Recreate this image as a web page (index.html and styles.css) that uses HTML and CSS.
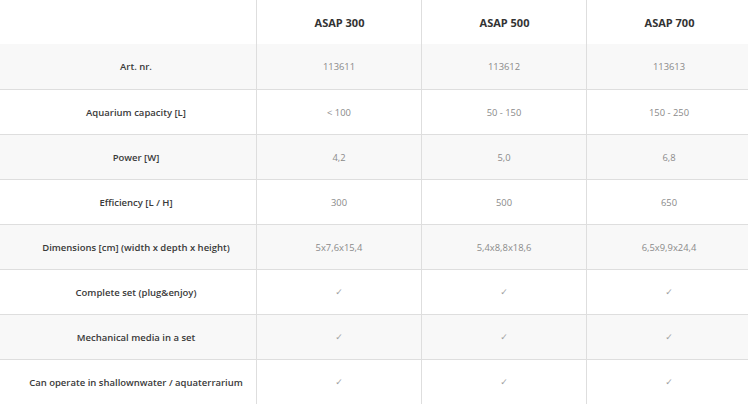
FILE: index.html
```html
<!DOCTYPE html>
<html lang="en">
<head>
<meta charset="utf-8">
<title>ASAP comparison</title>
<link rel="stylesheet" href="styles.css">
</head>
<body>
<div class="wrap">
  <div class="specs">
    <div class="row head">
      <div class="cell label"></div>
      <div class="cell model">ASAP 300</div>
      <div class="cell model">ASAP 500</div>
      <div class="cell model">ASAP 700</div>
    </div>
    <div class="row first striped">
      <div class="cell label">Art. nr.</div>
      <div class="cell val">113611</div>
      <div class="cell val">113612</div>
      <div class="cell val">113613</div>
    </div>
    <div class="row">
      <div class="cell label">Aquarium capacity [L]</div>
      <div class="cell val">&lt; 100</div>
      <div class="cell val">50 - 150</div>
      <div class="cell val">150 - 250</div>
    </div>
    <div class="row striped">
      <div class="cell label">Power [W]</div>
      <div class="cell val">4,2</div>
      <div class="cell val">5,0</div>
      <div class="cell val">6,8</div>
    </div>
    <div class="row">
      <div class="cell label">Efficiency [L / H]</div>
      <div class="cell val">300</div>
      <div class="cell val">500</div>
      <div class="cell val">650</div>
    </div>
    <div class="row striped">
      <div class="cell label">Dimensions [cm] (width x depth x height)</div>
      <div class="cell val">5x7,6x15,4</div>
      <div class="cell val">5,4x8,8x18,6</div>
      <div class="cell val">6,5x9,9x24,4</div>
    </div>
    <div class="row">
      <div class="cell label">Complete set (plug&amp;enjoy)</div>
      <div class="cell val check">✓</div>
      <div class="cell val check">✓</div>
      <div class="cell val check">✓</div>
    </div>
    <div class="row striped">
      <div class="cell label">Mechanical media in a set</div>
      <div class="cell val check">✓</div>
      <div class="cell val check">✓</div>
      <div class="cell val check">✓</div>
    </div>
    <div class="row">
      <div class="cell label">Can operate in shallownwater / aquaterrarium</div>
      <div class="cell val check">✓</div>
      <div class="cell val check">✓</div>
      <div class="cell val check">✓</div>
    </div>
  </div>
</div>
</body>
</html>
```
FILE: styles.css
```css
html, body {
  margin: 0;
  padding: 0;
  background: #ffffff;
}

.wrap {
  width: 748px;
  height: 404px;
  overflow: hidden;
}

.specs {
  width: 751px;
  font-family: "Open Sans", "Liberation Sans", sans-serif;
}

.row {
  display: grid;
  grid-template-columns: 256px 165px 165px 165px;
  height: 45px;
  box-sizing: border-box;
  border-top: 1px solid #dedede;
}

.row.head {
  height: 44px;
  border-top: none;
}

.row.first {
  border-top: none;
}

.row.striped {
  background: #f8f8f8;
}

.cell {
  display: flex;
  align-items: center;
  justify-content: center;
  box-sizing: border-box;
}

.cell + .cell {
  border-left: 1px solid #dedede;
}

.label {
  padding-left: 16px;
  font-size: 9.5px;
  font-weight: 600;
  color: #3a3a3a;
}

.model {
  font-size: 11px;
  font-weight: 700;
  color: #333333;
  padding-left: 1px;
}

.val {
  font-size: 9.4px;
  font-weight: 400;
  color: #8a8a8a;
}

.check {
  font-family: "DejaVu Sans", sans-serif;
  font-size: 9px;
  color: #a0a0a0;
}
```
